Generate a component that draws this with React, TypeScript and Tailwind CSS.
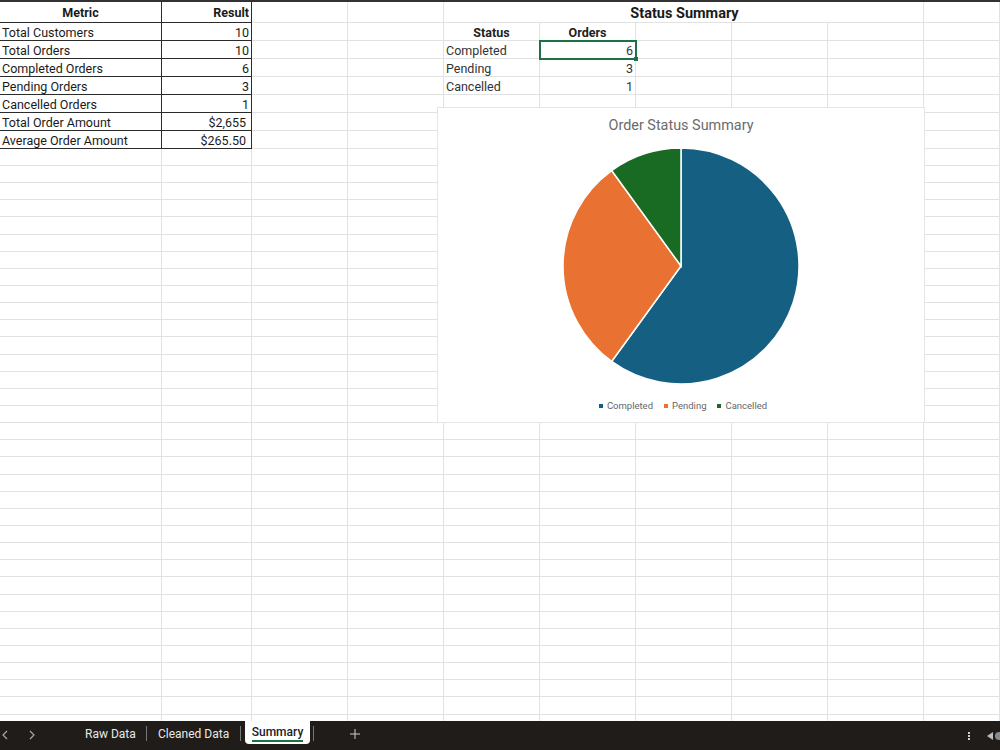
const columns = [162, 90, 96, 96, 96, 96, 96, 96, 96, 76];
const topRows = [23, 18, 18, 18, 18, 18, 18, 18, 17];
const emptyRows = 34;

const metrics = [
  ['Total Customers', '10'],
  ['Total Orders', '10'],
  ['Completed Orders', '6'],
  ['Pending Orders', '3'],
  ['Cancelled Orders', '1'],
  ['Total Order Amount', '$2,655'],
  ['Average Order Amount', '$265.50'],
];

type CellProps = {
  children?: React.ReactNode;
  className?: string;
  dark?: boolean;
};

function Cell({ children, className = '', dark = false }: CellProps) {
  return (
    <div
      className={`flex items-center overflow-visible whitespace-nowrap border-r border-b px-[2px] ${
        dark ? 'border-[#2b2b2b]' : 'border-[#e2e2e2]'
      } ${className}`}
    >
      {children}
    </div>
  );
}

function Sheet() {
  const cells: React.ReactNode[] = [];
  const rowCount = topRows.length + emptyRows;

  for (let r = 0; r < rowCount; r++) {
    for (let c = 0; c < columns.length; c++) {
      const key = `${r}-${c}`;
      if (r === 0 && c === 0) {
        cells.push(<Cell key={key} dark className="justify-center pt-[5px] font-bold">Metric</Cell>);
      } else if (r === 0 && c === 1) {
        cells.push(<Cell key={key} dark className="justify-end pt-[5px] font-bold">Result</Cell>);
      } else if (r >= 1 && r <= 7 && c === 0) {
        cells.push(<Cell key={key} dark className="pt-[3px]">{metrics[r - 1][0]}</Cell>);
      } else if (r >= 1 && r <= 7 && c === 1) {
        const money = r >= 6;
        cells.push(
          <Cell key={key} dark className={`justify-end pt-[3px] ${money ? 'pr-[5px]' : ''}`}>
            {metrics[r - 1][1]}
          </Cell>,
        );
      } else if (r === 0 && c === 4) {
        cells.push(
          <Cell key={key} className="col-span-5 justify-center pt-[6px] pl-[4px] text-[14.5px] font-bold">
            Status Summary
          </Cell>,
        );
      } else if (r === 0 && c > 4 && c < 9) {
        continue;
      } else if (r === 1 && c === 4) {
        cells.push(<Cell key={key} className="justify-center pt-[3px] font-bold text-[#222]">Status</Cell>);
      } else if (r === 1 && c === 5) {
        cells.push(<Cell key={key} className="justify-center pt-[3px] font-bold text-[#222]">Orders</Cell>);
      } else if (r >= 2 && r <= 4 && c === 4) {
        cells.push(<Cell key={key} className="pt-1 text-[#333]">{['Completed', 'Pending', 'Cancelled'][r - 2]}</Cell>);
      } else if (r >= 2 && r <= 4 && c === 5) {
        cells.push(<Cell key={key} className="justify-end pt-1 text-[#333]">{['6', '3', '1'][r - 2]}</Cell>);
      } else {
        cells.push(<Cell key={key} />);
      }
    }
  }

  return (
    <div
      className="grid text-[12.5px] leading-none text-[#1a1a1a]"
      style={{
        gridTemplateColumns: columns.map((w) => `${w}px`).join(' '),
        gridTemplateRows: [...topRows, ...Array(emptyRows).fill(17.15)].map((h) => `${h}px`).join(' '),
      }}
    >
      {cells}
    </div>
  );
}

// pie geometry, angles clockwise from 12 o'clock
function slice(cx: number, cy: number, r: number, from: number, to: number) {
  const pt = (a: number) => {
    const rad = ((a - 90) * Math.PI) / 180;
    return `${(cx + r * Math.cos(rad)).toFixed(2)} ${(cy + r * Math.sin(rad)).toFixed(2)}`;
  };
  const large = to - from > 180 ? 1 : 0;
  return `M${cx} ${cy} L${pt(from)} A${r} ${r} 0 ${large} 1 ${pt(to)} Z`;
}

function Chart() {
  return (
    <div className="absolute left-[437px] top-[105px] flex h-[316px] w-[488px] flex-col items-center border border-[#e6e6e6] bg-white">
      <div className="mt-[9px] text-[14.4px] leading-[18px] text-[#6b6b6b]">Order Status Summary</div>
      <svg width="240" height="240" viewBox="0 0 240 240" className="mt-[11px]">
        <path d={slice(120, 120, 118, 0, 216)} fill="#156082" stroke="#fff" strokeWidth="1.5" />
        <path d={slice(120, 120, 118, 216, 324)} fill="#e97132" stroke="#fff" strokeWidth="1.5" />
        <path d={slice(120, 120, 118, 324, 360)} fill="#196b24" stroke="#fff" strokeWidth="1.5" />
      </svg>
      <div className="mt-[14px] ml-[4px] flex items-center gap-[11px] text-[9.5px] leading-3 text-[#666]">
        <div className="flex items-center gap-[4px]"><span className="size-[4px] bg-[#156082]" />Completed</div>
        <div className="flex items-center gap-[4px]"><span className="size-[4px] bg-[#e97132]" />Pending</div>
        <div className="flex items-center gap-[4px]"><span className="size-[4px] bg-[#196b24]" />Cancelled</div>
      </div>
    </div>
  );
}

function Chevron({ flip }: { flip?: boolean }) {
  return (
    <svg width="8" height="10" viewBox="0 0 8 10" fill="none" stroke="#a8a8a8" strokeWidth="1.2">
      <path d={flip ? 'M2 1l4 4-4 4' : 'M6 1L2 5l4 4'} />
    </svg>
  );
}

function TabBar() {
  return (
    <div className="flex h-[29px] items-start overflow-hidden whitespace-nowrap bg-[#1f1c19] text-[12px] text-[#e8e8e8]">
      <div className="mt-[9px] ml-px flex w-[84px] gap-[19px]">
        <Chevron />
        <Chevron flip />
      </div>
      <div className="mt-[4px] w-[50px] leading-[18px]">Raw Data</div>
      <div className="mt-[5px] ml-[11px] h-[15px] w-px bg-[#777]" />
      <div className="mt-[4px] ml-[11px] w-[71px] leading-[18px]">Cleaned Data</div>
      <div className="mt-[5px] ml-[11px] h-[15px] w-px bg-[#777]" />
      <div className="ml-[4px] flex h-[23px] w-[65px] flex-col items-center rounded-b-[4px] bg-white text-[#222]">
        <span className="mt-[3px] border-b-2 border-[#1e7145] font-medium leading-[16px]">Summary</span>
      </div>
      <div className="mt-[5px] ml-[3px] h-[15px] w-px bg-[#777]" />
      <svg width="10" height="10" viewBox="0 0 10 10" stroke="#cfcfcf" strokeWidth="1" className="mt-[8px] ml-[36px]">
        <path d="M5 0v10M0 5h10" />
      </svg>
      <div className="mt-[11px] ml-auto flex items-start">
        <div className="flex flex-col gap-px">
          <span className="size-[2px] bg-[#cfcfcf]" />
          <span className="size-[2px] bg-[#cfcfcf]" />
          <span className="size-[2px] bg-[#cfcfcf]" />
        </div>
        <div className="ml-[17px] h-0 w-0 border-y-[4px] border-r-[6px] border-y-transparent border-r-[#bdbdbd]" />
        <div className="ml-[2px] h-[8px] w-[5px] rounded-l-full bg-[#8a8a8a]" />
      </div>
    </div>
  );
}

export default function App() {
  return (
    <div className="flex h-[750px] w-[1000px] flex-col overflow-hidden bg-white font-['Roboto','Liberation_Sans',sans-serif]">
      <div className="relative h-[721px] overflow-hidden border-t-2 border-[#333]">
        <div className="-mt-[2px]">
          <Sheet />
        </div>
        <div className="absolute -top-[2px] left-[540px] h-[2px] w-[96px] bg-[#1e7145]" />
        {/* selected cell */}
        <div className="absolute left-[539px] top-[38px] h-[20px] w-[98px] border-2 border-[#1e7145]">
          <div className="absolute -bottom-[3px] -right-[3px] size-[4px] bg-[#1e7145]" />
        </div>
        <Chart />
      </div>
      <TabBar />
    </div>
  );
}
